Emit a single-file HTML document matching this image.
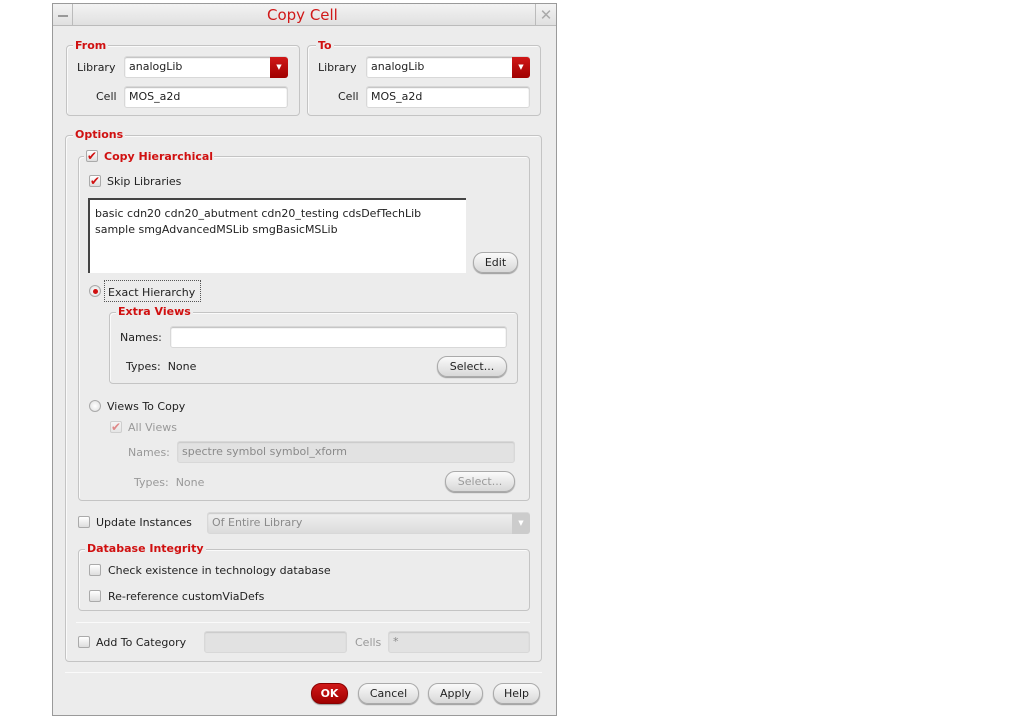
<!DOCTYPE html>
<html><head><meta charset="utf-8"><style>
*{box-sizing:border-box;margin:0;padding:0}
body{width:1013px;height:725px;background:#fff;position:relative;overflow:hidden;font-family:"DejaVu Sans","Liberation Sans",sans-serif;font-size:11px;color:#222}
.a{position:absolute}
.dlg{left:52px;top:3px;width:505px;height:713px;background:#ececec;border:1px solid #9a9a9a}
.title{left:53px;top:4px;width:503px;height:22px;background:linear-gradient(#f3f3f3,#e0e0e0);border-bottom:1px solid #bbb}
.fr{border:1px solid #c4c4c4;border-radius:4px;box-shadow:inset 1px 1px 0 #fafafa}
.lbl{font-weight:bold;color:#d01010;background:#ececec;padding:0 2px;line-height:13px}
.t{line-height:13px;white-space:nowrap}
.in{background:#fff;border:1px solid #d8d8d8;border-radius:3px;box-shadow:inset 0 1px 1px #bbb;padding-left:4px;line-height:20px;white-space:nowrap}
.dis{background:#e2e2e2;color:#8a8a8a;box-shadow:inset 0 1px 1px #c8c8c8}
.cb{width:12px;height:12px;background:linear-gradient(#fff,#ddd);border:1px solid #aaa;border-radius:2px}
.ck{color:#d01010;font-size:12px;line-height:10px;font-weight:bold;text-align:center}
.btn{border:1px solid #aaa;border-radius:10px;background:linear-gradient(#fafafa,#d8d8d8);text-align:center;line-height:19px;box-shadow:0 1px 1px #999}
.red{background:linear-gradient(#d01818,#a00000);color:#fff;font-weight:bold;border-color:#800}
.gray{color:#999}
.rad{width:12px;height:12px;border-radius:50%;border:1px solid #aaa;background:radial-gradient(#fff,#ddd)}
.hr{height:1px;background:#c8c8c8;border-bottom:1px solid #fafafa}
</style></head><body>
<div class="a dlg"></div>
<div class="a title"></div>
<div class="a" style="left:53px;top:4px;width:20px;height:22px;border-right:1px solid #bbb"><div class="a" style="left:5px;top:11px;width:10px;height:2px;background:#999"></div></div>
<div class="a" style="left:535px;top:4px;width:21px;height:22px;border-left:1px solid #bbb;color:#aaa;font-size:15px;text-align:center;line-height:22px">✕</div>
<div class="a t" style="left:267px;top:7px;font-size:15px;line-height:16px;color:#d01818">Copy Cell</div>

<div class="a fr" style="left:66px;top:45px;width:234px;height:71px"></div>
<div class="a lbl" style="left:73px;top:39px">From</div>
<div class="a t" style="left:77px;top:61px">Library</div>
<div class="a in" style="left:124px;top:56px;width:164px;height:22px">analogLib</div>
<div class="a" style="left:270px;top:57px;width:18px;height:21px;background:linear-gradient(#d01818,#a00000);border-radius:0 3px 3px 0;color:#fff;font-size:7px;text-align:center;line-height:21px">▼</div>
<div class="a t" style="left:96px;top:90px">Cell</div>
<div class="a in" style="left:124px;top:86px;width:164px;height:22px">MOS_a2d</div>
<div class="a fr" style="left:307px;top:45px;width:234px;height:71px"></div>
<div class="a lbl" style="left:316px;top:39px">To</div>
<div class="a t" style="left:318px;top:61px">Library</div>
<div class="a in" style="left:366px;top:56px;width:164px;height:22px">analogLib</div>
<div class="a" style="left:512px;top:57px;width:18px;height:21px;background:linear-gradient(#d01818,#a00000);border-radius:0 3px 3px 0;color:#fff;font-size:7px;text-align:center;line-height:21px">▼</div>
<div class="a t" style="left:338px;top:90px">Cell</div>
<div class="a in" style="left:366px;top:86px;width:164px;height:22px">MOS_a2d</div>

<div class="a fr" style="left:65px;top:135px;width:477px;height:527px"></div>
<div class="a lbl" style="left:73px;top:128px">Options</div>
<div class="a fr" style="left:78px;top:156px;width:452px;height:345px"></div>
<div class="a lbl" style="left:84px;top:150px;width:130px;height:14px"></div>
<div class="a cb ck" style="left:86px;top:150px">✔</div>
<div class="a t" style="left:104px;top:150px;font-weight:bold;color:#d01010">Copy Hierarchical</div>
<div class="a cb ck" style="left:89px;top:175px">✔</div>
<div class="a t" style="left:107px;top:175px">Skip Libraries</div>
<div class="a" style="left:88px;top:198px;width:378px;height:75px;background:#fff;border-top:2px solid #444;border-left:2px solid #444"></div>
<div class="a t" style="left:95px;top:206px;line-height:16px">basic cdn20 cdn20_abutment cdn20_testing cdsDefTechLib<br>sample smgAdvancedMSLib smgBasicMSLib</div>
<div class="a btn" style="left:473px;top:252px;width:45px;height:21px">Edit</div>
<div class="a rad" style="left:89px;top:285px"><div class="a" style="left:3px;top:3px;width:5px;height:5px;border-radius:50%;background:#d01010"></div></div>
<div class="a t" style="left:104px;top:280px;width:97px;height:22px;border:1px dotted #555;padding:5px 0 0 3px">Exact Hierarchy</div>
<div class="a fr" style="left:109px;top:312px;width:409px;height:72px"></div>
<div class="a lbl" style="left:116px;top:305px">Extra Views</div>
<div class="a t" style="left:120px;top:331px">Names:</div>
<div class="a in" style="left:170px;top:326px;width:337px;height:22px"></div>
<div class="a t" style="left:126px;top:360px">Types:&nbsp; None</div>
<div class="a btn" style="left:437px;top:356px;width:70px;height:21px">Select...</div>
<div class="a rad" style="left:89px;top:400px"></div>
<div class="a t" style="left:107px;top:400px">Views To Copy</div>
<div class="a cb ck" style="left:110px;top:421px;opacity:.45">✔</div>
<div class="a t gray" style="left:128px;top:421px">All Views</div>
<div class="a t gray" style="left:128px;top:446px">Names:</div>
<div class="a in dis" style="left:177px;top:441px;width:338px;height:22px">spectre symbol symbol_xform</div>
<div class="a t gray" style="left:134px;top:476px">Types:&nbsp; None</div>
<div class="a btn gray" style="left:445px;top:471px;width:70px;height:21px">Select...</div>

<div class="a cb" style="left:78px;top:516px"></div>
<div class="a t" style="left:96px;top:516px">Update Instances</div>
<div class="a in dis" style="left:207px;top:512px;width:323px;height:22px;background:linear-gradient(#f0f0f0,#dcdcdc)">Of Entire Library</div>
<div class="a" style="left:512px;top:513px;width:18px;height:21px;background:#ccc;color:#fff;font-size:7px;text-align:center;line-height:21px;border-radius:0 3px 3px 0">▼</div>

<div class="a fr" style="left:78px;top:549px;width:452px;height:62px"></div>
<div class="a lbl" style="left:85px;top:542px">Database Integrity</div>
<div class="a cb" style="left:89px;top:564px"></div>
<div class="a t" style="left:108px;top:564px">Check existence in technology database</div>
<div class="a cb" style="left:89px;top:590px"></div>
<div class="a t" style="left:108px;top:590px">Re-reference customViaDefs</div>
<div class="a hr" style="left:76px;top:622px;width:454px"></div>
<div class="a cb" style="left:78px;top:636px"></div>
<div class="a t" style="left:96px;top:636px">Add To Category</div>
<div class="a in dis" style="left:204px;top:631px;width:143px;height:22px"></div>
<div class="a t gray" style="left:355px;top:636px">Cells</div>
<div class="a in dis" style="left:388px;top:631px;width:142px;height:22px">*</div>

<div class="a hr" style="left:65px;top:672px;width:477px"></div>
<div class="a btn red" style="left:311px;top:683px;width:37px;height:21px">OK</div>
<div class="a btn" style="left:358px;top:683px;width:61px;height:21px">Cancel</div>
<div class="a btn" style="left:428px;top:683px;width:55px;height:21px">Apply</div>
<div class="a btn" style="left:493px;top:683px;width:47px;height:21px">Help</div>
</body></html>
